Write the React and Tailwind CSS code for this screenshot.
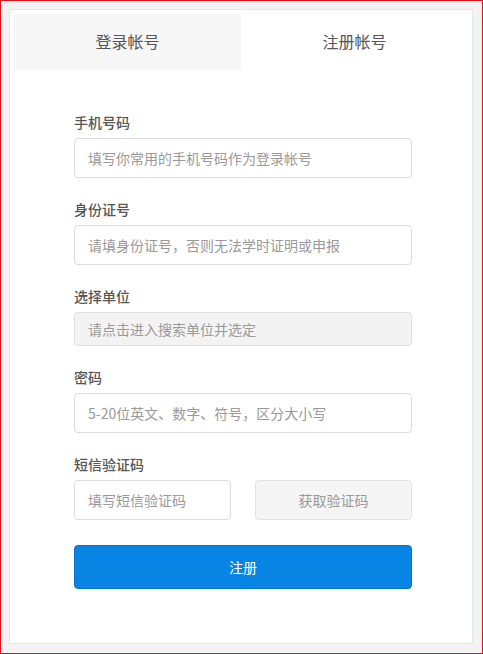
import React from "react";

const font = { fontFamily: '"Noto Sans CJK SC", "Noto Sans", sans-serif' };

const Field = ({ label, placeholder, disabled, short }) => (
  <div className="flex flex-col">
    <label className="h-5 text-[14px] leading-5 font-medium text-[#555]">{label}</label>
    <input
      type="text"
      placeholder={placeholder}
      disabled={disabled}
      className={`mt-[6px] w-full rounded-[4px] border px-[13px] text-[14px] outline-none placeholder:text-[#999] ${
        short ? "h-[34px] border-[#e0e0e0] bg-[#f3f3f3]" : "h-[40px] border-[#dcdcdc] bg-white"
      }`}
    />
  </div>
);

const App = () => {
  return (
    <div
      className="w-[483px] h-[654px] border border-[#e3101a] bg-[#f3f3f3] pl-[8px] pr-[9px] pt-[8px] pb-[9px]"
      style={font}
    >
      <div className="h-full border border-[#e2e8e8] bg-white p-[4px]">
        <div className="flex h-[56px]">
          <button className="flex-1 bg-[#f7f7f7] pb-[3px] text-[16px] text-[#555]">登录帐号</button>
          <button className="flex-1 bg-white pb-[3px] text-[16px] text-[#555]">注册帐号</button>
        </div>

        <div className="ml-[60px] w-[338px] pt-[42px]">
          <div className="flex flex-col gap-[21px]">
            <Field label="手机号码" placeholder="填写你常用的手机号码作为登录帐号" />
            <Field label="身份证号" placeholder="请填身份证号，否则无法学时证明或申报" />
            <Field label="选择单位" placeholder="请点击进入搜索单位并选定" disabled short />
            <Field label="密码" placeholder="5-20位英文、数字、符号，区分大小写" />
            <div className="flex flex-col">
              <label className="h-5 text-[14px] leading-5 font-medium text-[#555]">短信验证码</label>
              <div className="mt-[6px] flex justify-between">
                <input
                  type="text"
                  placeholder="填写短信验证码"
                  className="h-[40px] w-[157px] rounded-[4px] border border-[#dcdcdc] px-[13px] text-[14px] outline-none placeholder:text-[#999]"
                />
                <button className="h-[40px] w-[157px] rounded-[4px] border border-[#e3e3e3] bg-[#f5f5f5] text-[14px] text-[#999]">
                  获取验证码
                </button>
              </div>
            </div>
          </div>
          <button className="mt-[25px] h-[44px] w-full rounded-[4px] border border-[#0a70c8] bg-[#0884e4] text-[14px] text-white">
            注册
          </button>
        </div>
      </div>
    </div>
  );
};

export default App;
